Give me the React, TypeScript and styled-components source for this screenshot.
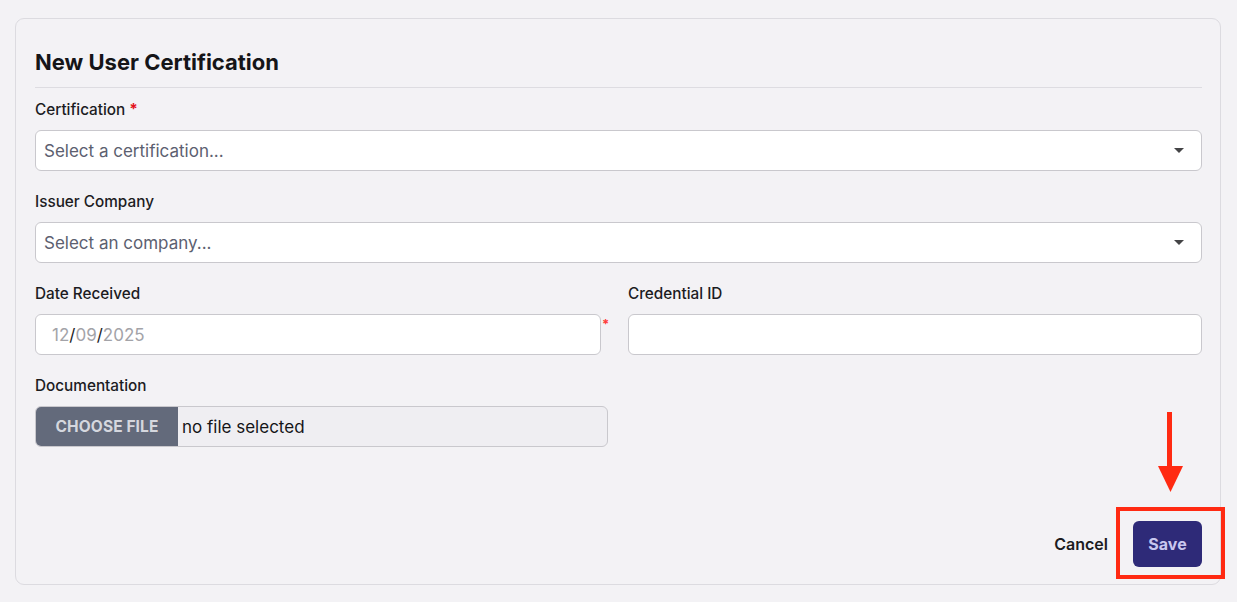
import React from 'react';
import styled, { createGlobalStyle } from 'styled-components';

const GlobalStyle = createGlobalStyle`
  html, body {
    margin: 0;
    padding: 0;
    background: #f3f2f5;
    font-family: Inter, "Noto Sans", "Liberation Sans", sans-serif;
    color: #1c1c1f;
  }
  * { box-sizing: border-box; }
`;

const Page = styled.div`
  position: relative;
  width: 1237px;
  height: 602px;
  padding: 18px 16px 0 15px;
`;

const Card = styled.div`
  height: 567px;
  border: 1px solid #dcdbe0;
  border-radius: 9px;
  background: #f3f2f5;
  padding: 27px 18px 17px 19px;
  display: flex;
  flex-direction: column;
`;

const Title = styled.h2`
  margin: 0;
  font-size: 22px;
  line-height: 32px;
  font-weight: 700;
  color: #151518;
  padding-bottom: 9px;
  border-bottom: 1px solid #dddce1;
`;

const Form = styled.div`
  display: flex;
  flex-direction: column;
  gap: 21px;
  margin-top: 12px;
`;

const Row = styled.div`
  display: grid;
  grid-template-columns: 1fr 1fr;
  column-gap: 19px;
`;

const Field = styled.div<{ $half?: boolean }>`
  display: flex;
  flex-direction: column;
  gap: 10px;
  width: ${p => (p.$half ? '573px' : 'auto')};
`;

const Label = styled.label`
  font-size: 15.3px;
  line-height: 20px;
  font-weight: 500;
  color: #1c1c1f;
`;

const Req = styled.span`
  color: #e3121b;
  margin-left: 4px;
  font-weight: 700;
`;

const SelectBox = styled.div`
  height: 41px;
  background: #fff;
  border: 1px solid #c9c8cd;
  border-radius: 6px;
  display: flex;
  align-items: center;
  justify-content: space-between;
  padding: 0 17px 0 8px;
  font-size: 17px;
  color: #5c6070;
`;

const Caret = styled.span`
  width: 0;
  height: 0;
  border-left: 5px solid transparent;
  border-right: 5px solid transparent;
  border-top: 5px solid #444446;
`;

const InputWrap = styled.div`
  display: flex;
  align-items: flex-start;
`;

const TextInput = styled.div`
  flex: 1;
  height: 41px;
  background: #fff;
  border: 1px solid #c9c8cd;
  border-radius: 6px;
  display: flex;
  align-items: center;
  padding: 0 16px;
  font-size: 17px;
  color: #a3a3a8;
`;

const Slash = styled.span`
  color: #1c1c1f;
`;

const Star = styled.span`
  width: 8px;
  padding-left: 1px;
  color: #ff3b3b;
  font-size: 13px;
  line-height: 13px;
  margin-top: 4px;
  font-weight: 700;
`;

const FileBox = styled.div`
  height: 41px;
  border: 1px solid #c9c8cd;
  border-radius: 6px;
  display: flex;
  align-items: center;
  overflow: hidden;
  background: #efeef2;
`;

const FileButton = styled.span`
  height: 100%;
  width: 142px;
  background: #636a7b;
  color: #d5d7de;
  font-size: 15.5px;
  font-weight: 700;
  display: flex;
  align-items: center;
  justify-content: center;
  letter-spacing: 0.1px;
`;

const FileName = styled.span`
  font-size: 17px;
  color: #151518;
  padding-left: 4px;
`;

const Footer = styled.div`
  margin-top: auto;
  display: flex;
  justify-content: flex-end;
  align-items: center;
  gap: 25px;
`;

const CancelButton = styled.button`
  border: none;
  background: none;
  padding: 0;
  font-family: inherit;
  font-size: 16px;
  font-weight: 600;
  color: #1c1c1f;
`;

const SaveButton = styled.button`
  width: 69px;
  height: 46px;
  border: none;
  border-radius: 6px;
  background: #2e2a78;
  color: #c9c7ef;
  font-family: inherit;
  font-size: 16px;
  font-weight: 700;
`;

const Highlight = styled.div`
  position: absolute;
  left: 1116px;
  top: 507px;
  width: 109px;
  height: 72px;
  border: 4.5px solid #ff2a12;
`;

const Arrow = styled.svg`
  position: absolute;
  left: 1156px;
  top: 412px;
`;

export default function App() {
  return (
    <Page>
      <GlobalStyle />
      <Card>
        <Title>New User Certification</Title>
        <Form>
          <Field>
            <Label>
              Certification<Req>*</Req>
            </Label>
            <SelectBox>
              Select a certification...
              <Caret />
            </SelectBox>
          </Field>
          <Field>
            <Label>Issuer Company</Label>
            <SelectBox>
              Select an company...
              <Caret />
            </SelectBox>
          </Field>
          <Row>
            <Field>
              <Label>Date Received</Label>
              <InputWrap>
                <TextInput>
                  12<Slash>/</Slash>09<Slash>/</Slash>2025
                </TextInput>
                <Star>*</Star>
              </InputWrap>
            </Field>
            <Field>
              <Label>Credential ID</Label>
              <TextInput />
            </Field>
          </Row>
          <Field $half>
            <Label>Documentation</Label>
            <FileBox>
              <FileButton>CHOOSE FILE</FileButton>
              <FileName>no file selected</FileName>
            </FileBox>
          </Field>
        </Form>
        <Footer>
          <CancelButton>Cancel</CancelButton>
          <SaveButton>Save</SaveButton>
        </Footer>
      </Card>
      <Highlight />
      <Arrow width="30" height="82" viewBox="0 0 30 82">
        <rect x="11" y="0" width="5" height="58" fill="#ff2a12" />
        <polygon points="2,54 27,54 14.5,80" fill="#ff2a12" />
      </Arrow>
    </Page>
  );
}
